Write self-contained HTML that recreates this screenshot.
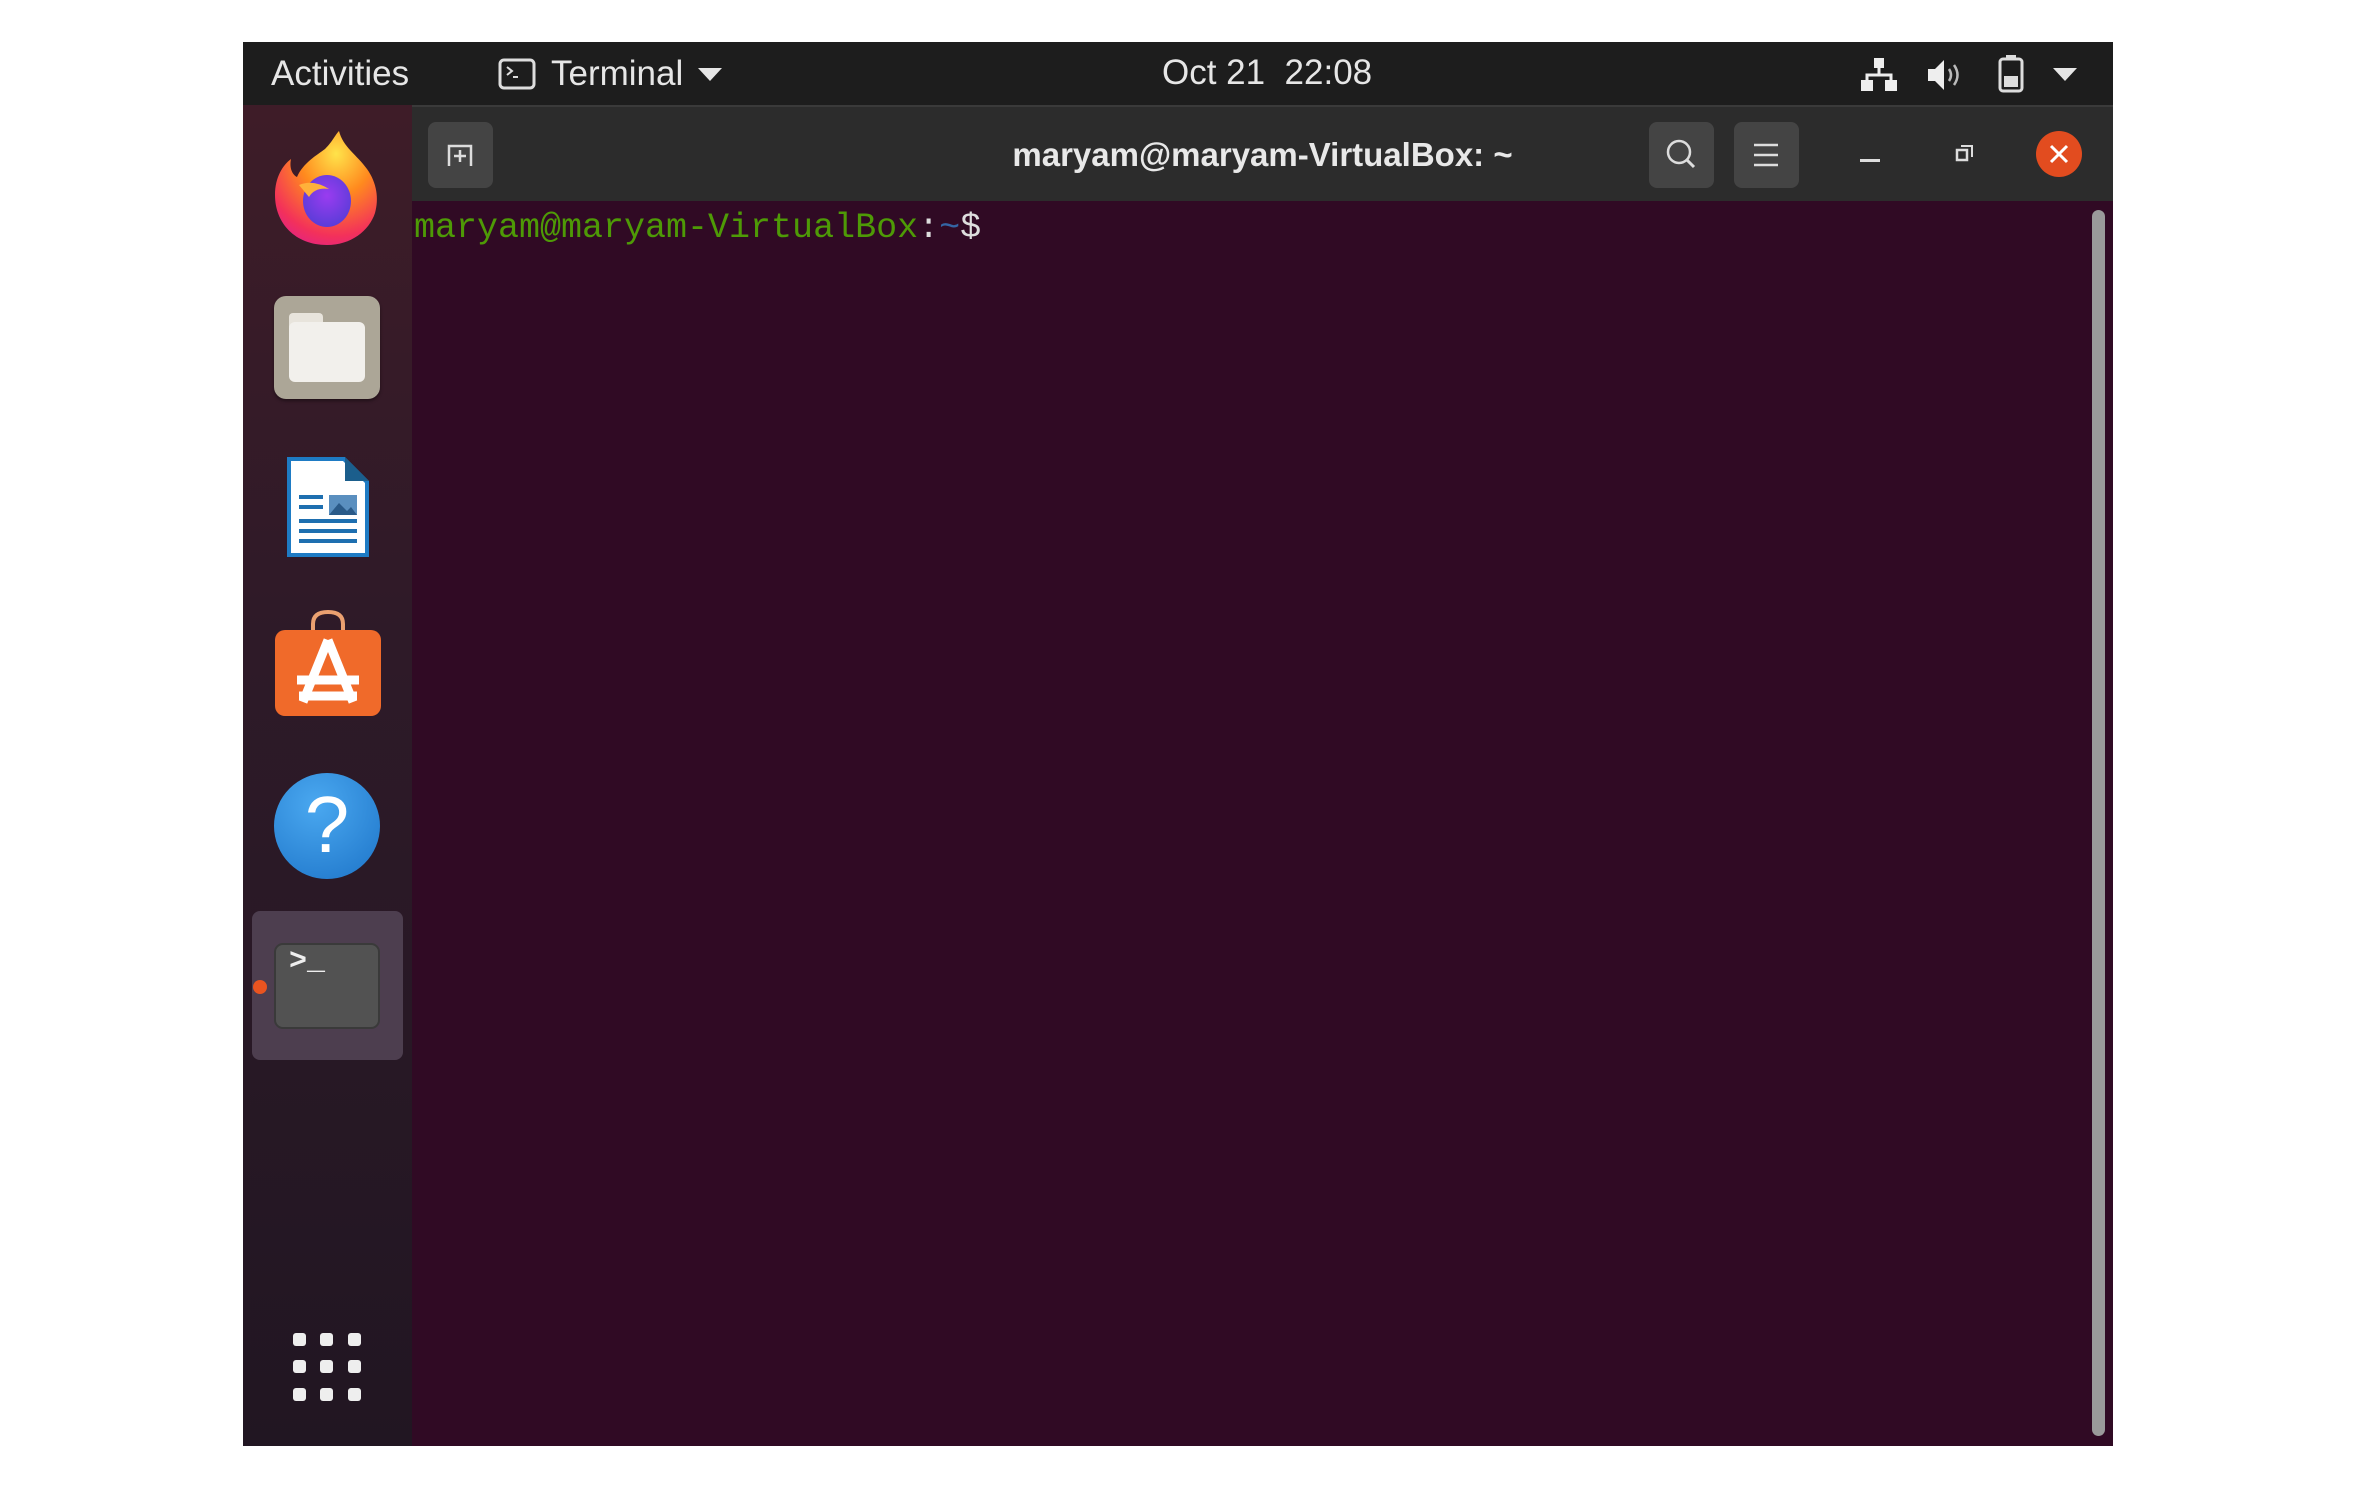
<!DOCTYPE html>
<html><head><meta charset="utf-8"><style>
*{margin:0;padding:0;box-sizing:border-box}
body{width:2356px;height:1488px;background:#fff;position:relative;overflow:hidden;font-family:"Liberation Sans",sans-serif}
.abs{position:absolute}
#top{left:243px;top:42px;width:1870px;height:63px;background:#1d1d1d;color:#e6e6e6;font-size:35px}
#dock{left:243px;top:105px;width:169px;height:1341px;background:linear-gradient(180deg,#3e1c28 0%,#2e1a28 40%,#211622 100%)}
#title{left:412px;top:105px;width:1701px;height:96px;background:#2c2c2c;border-top:2px solid #3a3a3a}
#term{left:412px;top:201px;width:1701px;height:1245px;background:#300a24}
.btn{position:absolute;top:15px;width:65px;height:66px;background:#444;border-radius:8px}
</style></head><body>
<div id="top" class="abs">
  <div class="abs" style="left:28px;top:12px">Activities</div>
  <svg class="abs" style="left:255px;top:16px" width="38" height="32" viewBox="0 0 38 32"><rect x="2" y="2" width="34" height="28" rx="4" fill="none" stroke="#ddd" stroke-width="3"/><path d="M9 9l5 4-5 4M15 19h5" stroke="#ddd" stroke-width="2" fill="none"/></svg>
  <div class="abs" style="left:308px;top:12px">Terminal</div>
  <svg class="abs" style="left:455px;top:26px" width="24" height="14"><path d="M0 0h24L12 13z" fill="#e6e6e6"/></svg>
  <div class="abs" style="left:919px;top:11px">Oct 21&nbsp;&nbsp;22:08</div>
  <svg class="abs" style="left:1618px;top:16px" width="36" height="34" viewBox="0 0 36 34"><rect x="13" y="0" width="10" height="10" fill="#eee"/><rect x="0" y="22" width="12" height="11" fill="#eee"/><rect x="24" y="22" width="12" height="11" fill="#eee"/><path d="M18 10v7M6 22v-5h24v5" stroke="#eee" stroke-width="3" fill="none"/></svg>
  <svg class="abs" style="left:1683px;top:16px" width="38" height="34" viewBox="0 0 38 34"><path d="M2 11h7l9-9v30l-9-9H2z" fill="#eee"/><path d="M23 11q4 6 0 12M28 7q7 10 0 20" stroke="#bbb" stroke-width="2.5" fill="none"/></svg>
  <svg class="abs" style="left:1755px;top:13px" width="26" height="38" viewBox="0 0 26 38"><rect x="8" y="0" width="10" height="4" fill="#ddd"/><rect x="2" y="4" width="22" height="32" rx="3" fill="none" stroke="#ddd" stroke-width="3"/><rect x="6" y="21" width="14" height="11" fill="#ddd"/></svg>
  <svg class="abs" style="left:1810px;top:26px" width="24" height="14"><path d="M0 0h24L12 13z" fill="#e6e6e6"/></svg>
</div>
<div id="dock" class="abs">
  <svg class="abs" style="left:30px;top:24px" width="108" height="118" viewBox="0 0 108 118">
    <defs><radialGradient id="ff" cx="0.6" cy="0.2" r="0.9"><stop offset="0" stop-color="#ffe34a"/><stop offset="0.4" stop-color="#ff8a1e"/><stop offset="0.8" stop-color="#f3315a"/><stop offset="1" stop-color="#e0208a"/></radialGradient><radialGradient id="fp" cx="0.5" cy="0.4" r="0.6"><stop offset="0" stop-color="#9a3cf0"/><stop offset="1" stop-color="#5b3cd8"/></radialGradient></defs>
    <path d="M54 116C22 116 2 94 2 66 2 48 10 36 18 30 16 40 20 46 24 48 30 34 44 26 52 20 60 12 62 6 66 2 70 18 84 26 94 40 104 54 106 70 102 84 96 102 78 116 54 116z" fill="url(#ff)"/>
    <ellipse cx="54" cy="72" rx="24" ry="26" fill="url(#fp)"/>
    <path d="M26 56q14-6 30 4-14-2-20 8z" fill="#ffb13a"/>
  </svg>
  <div class="abs" style="left:31px;top:191px;width:106px;height:103px;background:#aca697;border-radius:12px;box-shadow:0 2px 3px rgba(0,0,0,.4)"></div>
  <div class="abs" style="left:46px;top:208px;width:34px;height:14px;background:#e8e4dc;border-radius:4px 4px 0 0"></div>
  <div class="abs" style="left:46px;top:217px;width:76px;height:60px;background:#f2f0ec;border-radius:6px"></div>
  <svg class="abs" style="left:40px;top:348px" width="90" height="110" viewBox="0 0 90 110">
    <path d="M4 4h58l24 24v76H4z" fill="#1e7bc4"/><path d="M8 8h52l22 22v70H8z" fill="#fff"/><path d="M62 4v24h24z" fill="#1b5e8c"/>
    <rect x="46" y="42" width="28" height="20" fill="#5a8fbf"/><path d="M46 62l10-12 8 8 4-4 6 8z" fill="#2a5a88"/>
    <g fill="#1e6fb0"><rect x="16" y="42" width="24" height="4"/><rect x="16" y="52" width="24" height="4"/><rect x="16" y="66" width="58" height="4"/><rect x="16" y="76" width="58" height="4"/><rect x="16" y="86" width="58" height="4"/></g>
  </svg>
  <svg class="abs" style="left:32px;top:505px" width="106" height="106" viewBox="0 0 106 106">
    <path d="M38 22v-8q0-12 15-12t15 12v8" stroke="#eaa070" stroke-width="4" fill="none"/>
    <rect x="0" y="20" width="106" height="86" rx="10" fill="#f06a2a"/>
    <path d="M53 30L28 92M53 30l25 62M22 70h62M24 86h58" stroke="#fff" stroke-width="9" fill="none"/>
  </svg>
  <div class="abs" style="left:31px;top:668px;width:106px;height:106px;border-radius:53px;background:radial-gradient(circle at 40% 30%,#4aa8f0,#1d74c8)"></div>
  <div class="abs" style="left:31px;top:667px;width:106px;text-align:center;color:#fff;font-size:80px;line-height:106px">?</div>
  <div class="abs" style="left:9px;top:806px;width:151px;height:149px;background:#4d3e4f;border-radius:8px"></div>
  <div class="abs" style="left:10px;top:875px;width:14px;height:14px;border-radius:7px;background:#e95420"></div>
  <div class="abs" style="left:31px;top:838px;width:106px;height:86px;background:#525252;border-radius:9px;border:2px solid #3a3a3a"></div>
  <div class="abs" style="left:46px;top:840px;color:#eee;font-family:'Liberation Mono',monospace;font-size:30px;font-weight:bold">&gt;_</div>
  <svg class="abs" style="left:50px;top:1228px" width="68" height="68"><g fill="#eee"><rect x="0" y="0" width="13" height="13" rx="3"/><rect x="27" y="0" width="13" height="13" rx="3"/><rect x="55" y="0" width="13" height="13" rx="3"/><rect x="0" y="27" width="13" height="13" rx="3"/><rect x="27" y="27" width="13" height="13" rx="3"/><rect x="55" y="27" width="13" height="13" rx="3"/><rect x="0" y="55" width="13" height="13" rx="3"/><rect x="27" y="55" width="13" height="13" rx="3"/><rect x="55" y="55" width="13" height="13" rx="3"/></g></svg>
</div>
<div id="title" class="abs">
  <div class="btn" style="left:16px"><svg width="65" height="66"><path d="M21 44V24h22v20M32 28v12M26 34h12" stroke="#ddd" stroke-width="2.5" fill="none"/></svg></div>
  <div class="abs" style="left:0;width:1701px;top:29px;text-align:center;color:#e8e8e8;font-weight:bold;font-size:33px">maryam@maryam-VirtualBox: ~</div>
  <div class="btn" style="left:1237px"><svg width="65" height="66"><circle cx="30" cy="30" r="11" stroke="#ddd" stroke-width="2.5" fill="none"/><path d="M38 38l7 7" stroke="#ddd" stroke-width="3"/></svg></div>
  <div class="btn" style="left:1322px"><svg width="65" height="66"><path d="M20 23h24M20 33h24M20 43h24" stroke="#ddd" stroke-width="2.5"/></svg></div>
  <div class="abs" style="left:1448px;top:52px;width:20px;height:3px;background:#ddd"></div>
  <svg class="abs" style="left:1543px;top:36px" width="20" height="20"><rect x="2" y="7" width="10" height="10" fill="none" stroke="#ddd" stroke-width="2.5"/><path d="M6 3h11v11" stroke="#ddd" stroke-width="2" fill="none"/></svg>
  <div class="abs" style="left:1624px;top:24px;width:46px;height:46px;border-radius:23px;background:#e24c1f"></div>
  <svg class="abs" style="left:1636px;top:36px" width="22" height="22"><path d="M3 3l16 16M19 3L3 19" stroke="#fff" stroke-width="3"/></svg>
</div>
<div id="term" class="abs">
  <div class="abs" style="left:2px;top:7px;font-family:'Liberation Mono',monospace;font-size:35px;white-space:pre"><span style="color:#4e9a06">maryam@maryam-VirtualBox</span><span style="color:#ddd">:</span><span style="color:#3465a4">~</span><span style="color:#ddd">$</span></div>
  <div class="abs" style="left:1680px;top:9px;width:13px;height:1226px;background:#9a9a9a;border-radius:7px"></div>
</div>
</body></html>
